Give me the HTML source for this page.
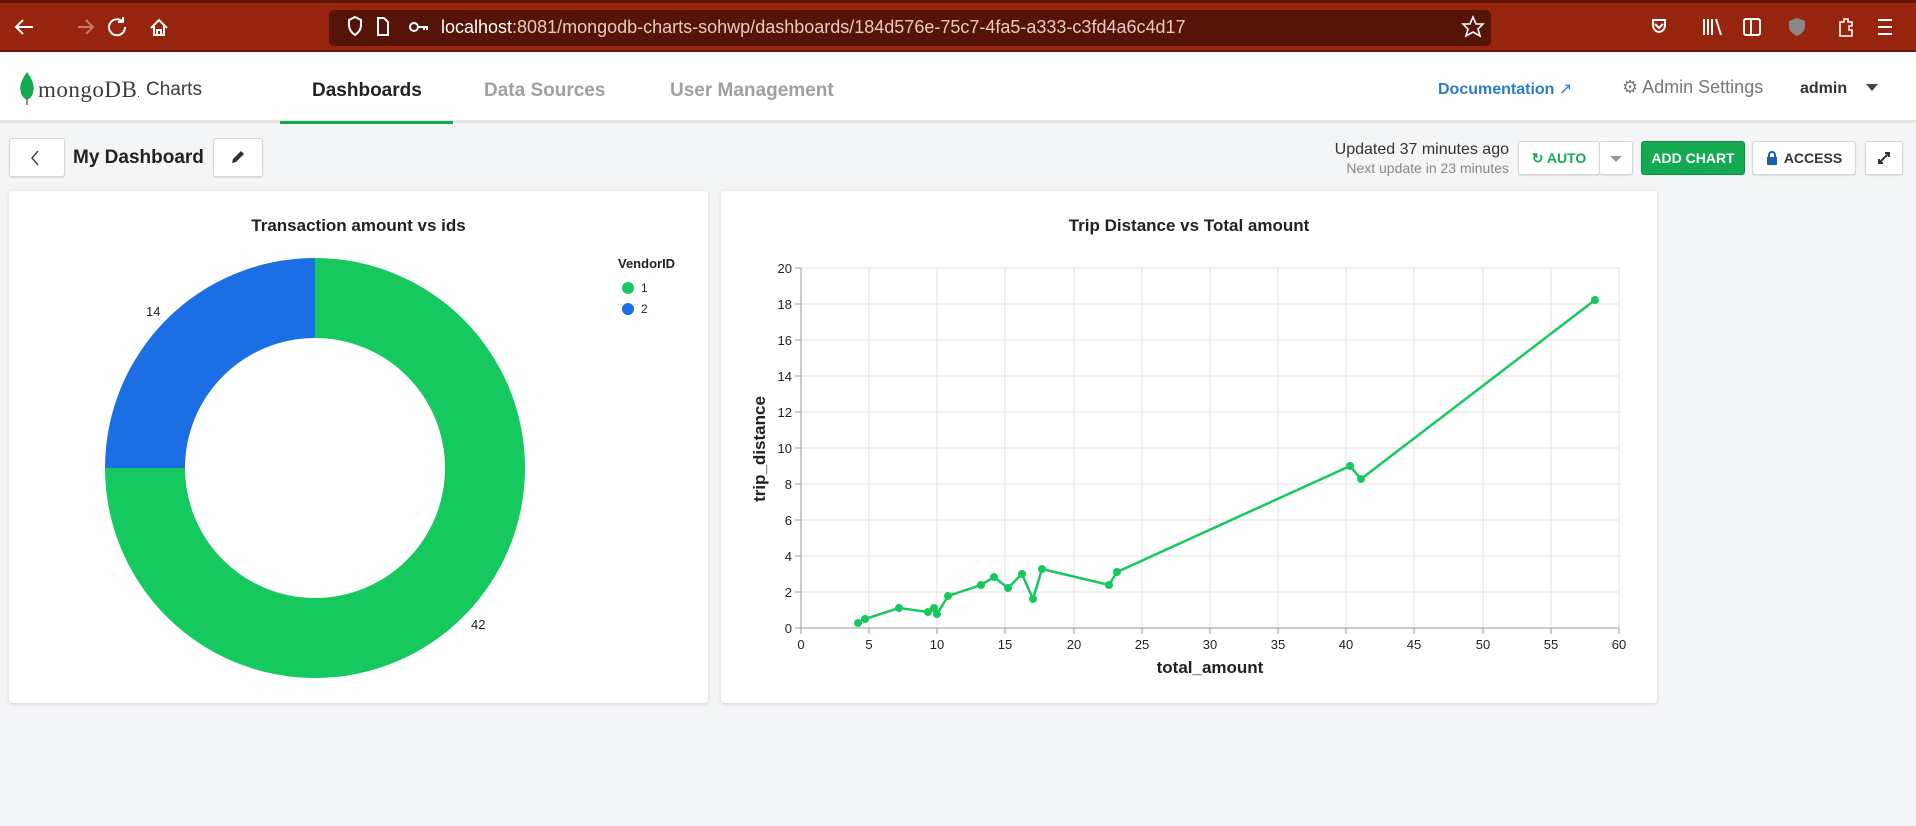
<!DOCTYPE html>
<html><head><meta charset="utf-8"><style>
*{box-sizing:border-box;margin:0;padding:0}
body{width:1916px;height:826px;overflow:hidden;background:#f4f5f6;font-family:"Liberation Sans",sans-serif;position:relative}
.abs{position:absolute}
.bar{left:0;top:0;width:1916px;height:52px;background:#97240c;border-top:3px solid #5e1507;border-bottom:2px solid #6a1a08}
.url{left:329px;top:10px;width:1162px;height:36px;background:#561408;border-radius:5px}
.hdr{left:0;top:52px;width:1916px;height:71px;background:#fff;border-bottom:3px solid #e4e6e8}
.nav{font-size:19px;font-weight:bold;top:80px}
.btn{background:#fff;border:1px solid #d4d6d8;border-radius:3px;box-shadow:0 1px 1px rgba(0,0,0,.1)}
.card{background:#fff;border-radius:3px;box-shadow:0 1px 3px rgba(0,0,0,.15)}
.bt{font-size:14px;font-weight:bold;display:flex;align-items:center;justify-content:center}
</style></head><body>
<div class="abs bar"></div>
<div class="abs url"></div>
<svg class="abs" style="left:0;top:0" width="1916" height="52" fill="none" stroke="#fff" stroke-width="2">
<path d="M33 27H16M23 20l-7 7 7 7"/>
<path d="M78 27h15M86 20l7 7-7 7" stroke="#c77a6a"/>
<path d="M122 21a8 8 0 1 0 3 6M123 17v5h-5"/>
<path d="M151 28l8-8 8 8M154 26v9h10v-9M157 35v-5h4v5"/>
<path d="M349 20l6-3 6 3v5c0 5-3 8-6 10-3-2-6-5-6-10z"/>
<path d="M378 18h6l4 4v13h-10z"/>
<circle cx="414" cy="27" r="4"/><path d="M418 27h10M424 27v3M427 27v3"/>
<path d="M1473 17l3 7 7 0-5 5 2 7-7-4-7 4 2-7-5-5 7 0z" stroke-width="1.6"/>
<path d="M1653 20h12v5c0 4-3 7-6 7s-6-3-6-7z M1655 24l4 4 4-4"/>
<path d="M1704 19v16M1708 19v16M1712 19v16M1716 19l5 16"/>
<rect x="1744" y="19" width="16" height="16" rx="2"/><path d="M1751 19v16"/>
<path d="M1797 18l8 3v6c0 4-4 7-8 9-4-2-8-5-8-9v-6z" fill="#888" stroke="none"/>
<path d="M1840 22h4v-3h4v3h4v4h-3v4h3v6h-12z" stroke-width="1.6"/>
<path d="M1878 20h14M1878 27h14M1878 34h14"/>
</svg>
<div class="abs" style="left:441px;top:17px;font-size:18px;color:#e8c8c0;white-space:nowrap"><span style="color:#fff">localhost</span>:8081/mongodb-charts-sohwp/dashboards/184d576e-75c7-4fa5-a333-c3fd4a6c4d17</div>
<div class="abs hdr"></div>
<svg class="abs" style="left:18px;top:71px" width="18" height="35"><path d="M9 1C3 9 1 16 3 22c1 4 4 6 6 7 2-1 5-3 6-7 2-6 0-13-6-21z" fill="#13aa52"/><path d="M9 26v8" stroke="#8a6b3a" stroke-width="1.5"/></svg>
<div class="abs" style="left:38px;top:77px;font-family:'Liberation Serif',serif;font-size:23px;color:#3d3d3d;letter-spacing:0.5px">mongoDB<span style="font-size:9px">.</span></div>
<div class="abs" style="left:146px;top:79px;font-size:19px;color:#3d3d3d">Charts</div>
<div class="abs nav" style="left:312px;color:#222">Dashboards</div>
<div class="abs nav" style="left:484px;color:#9ea0a2">Data Sources</div>
<div class="abs nav" style="left:670px;color:#9ea0a2">User Management</div>
<div class="abs" style="left:280px;top:121px;width:173px;height:3px;background:#13aa52"></div>
<div class="abs" style="left:1438px;top:79px;font-size:16px;font-weight:bold;color:#2a7dc6">Documentation <span style="font-weight:normal">&#x2197;&#xFE0E;</span></div>
<div class="abs" style="left:1622px;top:77px;font-size:18px;color:#777">&#9881; Admin Settings</div>
<div class="abs" style="left:1800px;top:80px;font-size:16px;font-weight:bold;color:#333">admin</div>
<div class="abs" style="left:1866px;top:84px;width:0;height:0;border-left:6px solid transparent;border-right:6px solid transparent;border-top:7px solid #444"></div>

<div class="abs btn" style="left:9px;top:138px;width:56px;height:39px"></div>
<svg class="abs" style="left:30px;top:149px" width="12" height="18"><path d="M8 2L2 9l6 7" stroke="#444" fill="none" stroke-width="1.5"/></svg>
<div class="abs" style="left:73px;top:147px;font-size:19px;font-weight:bold;color:#222">My Dashboard</div>
<div class="abs btn" style="left:213px;top:138px;width:50px;height:39px"></div>
<svg class="abs" style="left:230px;top:149px" width="16" height="16"><path d="M2 14l1-4 8-8 3 3-8 8z" fill="#333"/></svg>
<div class="abs" style="left:1300px;top:141px;width:209px;text-align:right;font-size:16px;color:#333">Updated 37 minutes ago</div>
<div class="abs" style="left:1300px;top:160px;width:209px;text-align:right;font-size:14px;color:#888">Next update in 23 minutes</div>
<div class="abs btn bt" style="left:1518px;top:141px;width:82px;height:34px;color:#13aa52">&#x21bb; AUTO</div>
<div class="abs btn" style="left:1599px;top:141px;width:34px;height:34px"></div>
<div class="abs" style="left:1610px;top:156px;border-left:6px solid transparent;border-right:6px solid transparent;border-top:6px solid #999"></div>
<div class="abs bt" style="left:1641px;top:141px;width:104px;height:34px;background:#13aa52;border-radius:3px;color:#fff;border:1px solid #0f8f44">ADD CHART</div>
<div class="abs btn bt" style="left:1752px;top:141px;width:104px;height:34px;color:#333"><svg width="12" height="14" style="margin-right:6px"><rect x="1" y="6" width="10" height="8" fill="#1b5fb5"/><path d="M3 6V4a3 3 0 0 1 6 0v2" stroke="#1b5fb5" stroke-width="2" fill="none"/></svg>ACCESS</div>
<div class="abs btn" style="left:1865px;top:141px;width:38px;height:34px"></div>
<svg class="abs" style="left:1877px;top:151px" width="14" height="14"><path d="M2 12L12 2M8 2h4v4M2 8v4h4" stroke="#333" stroke-width="2" fill="none"/></svg>

<div class="abs card" style="left:9px;top:191px;width:699px;height:512px"></div>
<div class="abs card" style="left:721px;top:191px;width:936px;height:512px"></div>
<div class="abs" style="left:9px;top:216px;width:699px;text-align:center;font-size:17px;font-weight:bold;color:#222">Transaction amount vs ids</div>
<div class="abs" style="left:721px;top:216px;width:936px;text-align:center;font-size:17px;font-weight:bold;color:#222">Trip Distance vs Total amount</div>

<svg class="abs" style="left:0;top:0" width="1916" height="826" font-family="Liberation Sans, sans-serif">
<path d="M315 258A210 210 0 1 1 105 468L185 468A130 130 0 1 0 315 338Z" fill="#16c95f"/>
<path d="M105 468A210 210 0 0 1 315 258L315 338A130 130 0 0 0 185 468Z" fill="#1b6ee3"/>
<text x="146" y="316" font-size="13" fill="#222">14</text>
<text x="471" y="629" font-size="13" fill="#222">42</text>
<text x="618" y="268" font-size="13" font-weight="bold" fill="#222">VendorID</text>
<circle cx="628" cy="288" r="6" fill="#16c95f"/><text x="641" y="292" font-size="12" fill="#222">1</text>
<circle cx="628" cy="309" r="6" fill="#1b6ee3"/><text x="641" y="313" font-size="12" fill="#222">2</text>
<g stroke="#e3e3e3" stroke-width="1">
<path d="M801 268H1619M801 304H1619M801 340H1619M801 376H1619M801 412H1619M801 448H1619M801 484H1619M801 520H1619M801 556H1619M801 592H1619"/>
<path d="M869 268V628M937 268V628M1005 268V628M1074 268V628M1142 268V628M1210 268V628M1278 268V628M1346 268V628M1414 268V628M1483 268V628M1551 268V628M1619 268V628"/>
</g>
<path d="M801 268V628H1619" stroke="#999" fill="none"/>
<g stroke="#999"><path d="M795 268h6M795 304h6M795 340h6M795 376h6M795 412h6M795 448h6M795 484h6M795 520h6M795 556h6M795 592h6M795 628h6"/>
<path d="M801 628v6M869 628v6M937 628v6M1005 628v6M1074 628v6M1142 628v6M1210 628v6M1278 628v6M1346 628v6M1414 628v6M1483 628v6M1551 628v6M1619 628v6"/></g>
<g font-size="13" fill="#222" text-anchor="end">
<text x="792" y="273">20</text><text x="792" y="309">18</text><text x="792" y="345">16</text><text x="792" y="381">14</text><text x="792" y="417">12</text><text x="792" y="453">10</text><text x="792" y="489">8</text><text x="792" y="525">6</text><text x="792" y="561">4</text><text x="792" y="597">2</text><text x="792" y="633">0</text></g>
<g font-size="13" fill="#222" text-anchor="middle">
<text x="801" y="649">0</text><text x="869" y="649">5</text><text x="937" y="649">10</text><text x="1005" y="649">15</text><text x="1074" y="649">20</text><text x="1142" y="649">25</text><text x="1210" y="649">30</text><text x="1278" y="649">35</text><text x="1346" y="649">40</text><text x="1414" y="649">45</text><text x="1483" y="649">50</text><text x="1551" y="649">55</text><text x="1619" y="649">60</text></g>
<text x="1210" y="673" font-size="17" font-weight="bold" text-anchor="middle" fill="#222">total_amount</text>
<text transform="translate(765 449) rotate(-90)" font-size="17" font-weight="bold" text-anchor="middle" fill="#222">trip_distance</text>
<polyline fill="none" stroke="#16c95f" stroke-width="2.5" points="858,623 865,619 899,608 928,612 934,608 937,614 948,596 981,585 994,577 1008,588 1022,574 1033,599 1042,569 1109,585 1117,572 1350,466 1361,479 1595,300"/>
<g fill="#16c95f">
<circle cx="858" cy="623" r="4"/><circle cx="865" cy="619" r="4"/><circle cx="899" cy="608" r="4"/><circle cx="928" cy="612" r="4"/><circle cx="934" cy="608" r="4"/><circle cx="937" cy="614" r="4"/><circle cx="948" cy="596" r="4"/><circle cx="981" cy="585" r="4"/><circle cx="994" cy="577" r="4"/><circle cx="1008" cy="588" r="4"/><circle cx="1022" cy="574" r="4"/><circle cx="1033" cy="599" r="4"/><circle cx="1042" cy="569" r="4"/><circle cx="1109" cy="585" r="4"/><circle cx="1117" cy="572" r="4"/><circle cx="1350" cy="466" r="4"/><circle cx="1361" cy="479" r="4"/><circle cx="1595" cy="300" r="4"/></g>
</svg>
</body></html>
